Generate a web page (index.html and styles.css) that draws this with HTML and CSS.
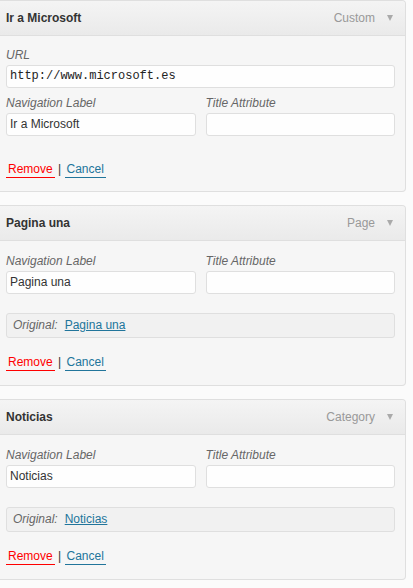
FILE: index.html
```html
<!DOCTYPE html>
<html>
<head>
<meta charset="utf-8">
<link rel="stylesheet" href="styles.css">
</head>
<body>
<div class="menu">
  <div class="item">
    <div class="head">
      <span class="title">Ir a Microsoft</span>
      <span class="type">Custom</span>
      <span class="arrow"></span>
    </div>
    <div class="settings first">
      <div class="field">
        <label class="lbl">URL</label>
        <div class="input mono">http://www.microsoft.es</div>
      </div>
      <div class="row">
        <div class="field">
          <label class="lbl">Navigation Label</label>
          <div class="input">Ir a Microsoft</div>
        </div>
        <div class="field">
          <label class="lbl">Title Attribute</label>
          <div class="input"></div>
        </div>
      </div>
      <div class="actions first"><a class="remove">Remove</a> <span class="sep">|</span> <a class="cancel">Cancel</a></div>
    </div>
  </div>

  <div class="item">
    <div class="head">
      <span class="title">Pagina una</span>
      <span class="type">Page</span>
      <span class="arrow"></span>
    </div>
    <div class="settings">
      <div class="row">
        <div class="field">
          <label class="lbl">Navigation Label</label>
          <div class="input">Pagina una</div>
        </div>
        <div class="field">
          <label class="lbl">Title Attribute</label>
          <div class="input"></div>
        </div>
      </div>
      <div class="original"><span class="orig-lbl">Original:</span><a class="orig-link">Pagina una</a></div>
      <div class="actions"><a class="remove">Remove</a> <span class="sep">|</span> <a class="cancel">Cancel</a></div>
    </div>
  </div>

  <div class="item">
    <div class="head">
      <span class="title">Noticias</span>
      <span class="type">Category</span>
      <span class="arrow"></span>
    </div>
    <div class="settings">
      <div class="row">
        <div class="field">
          <label class="lbl">Navigation Label</label>
          <div class="input">Noticias</div>
        </div>
        <div class="field">
          <label class="lbl">Title Attribute</label>
          <div class="input"></div>
        </div>
      </div>
      <div class="original"><span class="orig-lbl">Original:</span><a class="orig-link">Noticias</a></div>
      <div class="actions"><a class="remove">Remove</a> <span class="sep">|</span> <a class="cancel">Cancel</a></div>
    </div>
  </div>
</div>
</body>
</html>
```
FILE: styles.css
```css
* { box-sizing: border-box; }
html, body { margin: 0; padding: 0; }
body {
  background: #fbfbfb;
  font-family: "Liberation Sans", Arial, sans-serif;
  font-size: 12px;
  line-height: 16px;
  color: #333;
  width: 413px;
  height: 588px;
  overflow: hidden;
}
.menu {
  display: flex;
  flex-direction: column;
  gap: 13px;
}
.item {
  width: 406px;
  border: 1px solid #dfdfdf;
  border-left: none;
  border-radius: 0 4px 4px 0;
  background: #f6f6f6;
}
.head {
  height: 35px;
  border-bottom: 1px solid #dfdfdf;
  background: linear-gradient(#f4f4f4, #eaeaea);
  border-radius: 0 4px 0 0;
  display: flex;
  align-items: center;
  padding: 0 12px 0 6px;
}
.title {
  font-weight: bold;
  color: #333;
  flex: 1;
}
.type {
  color: #999;
}
.arrow {
  width: 0;
  height: 0;
  margin-left: 12px;
  border-left: 3px solid transparent;
  border-right: 3px solid transparent;
  border-top: 6px solid #aaa;
}
.settings {
  padding: 12px 10px 15px 6px;
  display: flex;
  flex-direction: column;
}
.settings.first { padding-top: 11px; padding-bottom: 14px; }
.row {
  display: flex;
  gap: 10px;
}
.row .field { flex: 1; }
.field { display: flex; flex-direction: column; }
.field + .row { margin-top: 7px; }
.lbl {
  font-style: italic;
  color: #666;
  margin-bottom: 2px;
}
.input {
  height: 23px;
  border: 1px solid #dfdfdf;
  border-radius: 3px;
  background: #fefefe;
  padding: 2px 3px 0 3px;
  line-height: 17px;
  font-size: 12px;
  color: #333;
}
.input.mono {
  font-family: "Liberation Mono", "Courier New", monospace;
  color: #222;
}
.original {
  margin-top: 19px;
  height: 25px;
  border: 1px solid #dfdfdf;
  border-radius: 3px;
  background: #f1f1f1;
  padding: 3px 6px 0 6px;
  line-height: 17px;
}
.orig-lbl {
  font-style: italic;
  color: #666;
  margin-right: 7px;
}
.orig-link {
  color: #21759b;
  text-decoration: underline;
}
.actions {
  margin-top: 16px;
  color: #333;
}
.actions.first { margin-top: 25px; }
.remove {
  color: #f00;
  padding: 0 2px 1px 2px;
  border-bottom: 1px solid #f00;
}
.cancel {
  color: #21759b;
  padding: 0 2px 1px 2px;
  border-bottom: 1px solid #21759b;
}
.sep { color: #333; }
```
